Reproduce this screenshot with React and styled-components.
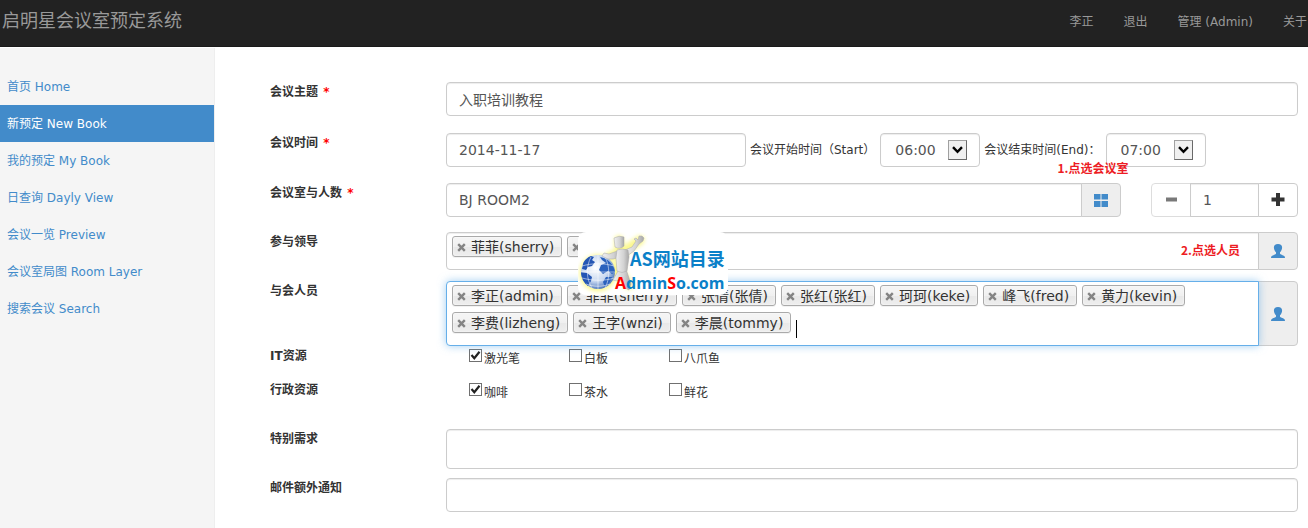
import React, { useState } from "react";
import styled, { createGlobalStyle } from "styled-components";

const menus = ["首页 Home", "新预定 New Book", "我的预定 My Book", "日查询 Dayly View", "会议一览 Preview", "会议室局图 Room Layer", "搜索会议 Search"];
const navs = ["李正", "退出", "管理 (Admin)", "关于"];
const hours = ["06:00", "07:00", "08:00", "09:00", "10:00"];
const itResources = ["激光笔", "白板", "八爪鱼"];
const officeResources = ["咖啡", "茶水", "鲜花"];

const UserIcon = () => (
  <svg width="14" height="14" viewBox="0 0 14 14" aria-hidden="true">
    <path
      fill="#428bca"
      d="M7 0C9.8 0 11.2 1.4 11.1 3.7C11 5.6 10.1 7.2 9 8.3V9.8C9.2 10.5 12 11.1 13.2 11.9C13.8 12.3 14 13 14 14H0C0 13 .2 12.3 .8 11.9C2 11.1 4.8 10.5 5 9.8V8.3C3.9 7.2 3 5.6 2.9 3.7C2.8 1.4 4.2 0 7 0Z"
    />
  </svg>
);

const GridIcon = () => (
  <svg width="14" height="14" viewBox="0 0 14 14" aria-hidden="true">
    <path fill="#428bca" d="M0 1H6.5V6.6H0ZM7.5 1H14V6.6H7.5ZM0 8H6.5V14H0ZM7.5 8H14V14H7.5Z" />
  </svg>
);

// 标签上的删除图标
const CloseIcon = () => (
  <svg width="9" height="9" viewBox="0 0 9 9" aria-hidden="true">
    <path d="M1.2 1.2L7.8 7.8M7.8 1.2L1.2 7.8" stroke="#848484" strokeWidth="2.4" />
  </svg>
);

const SiteLogo = () => (
  <svg width="150" height="63" viewBox="0 0 150 63" role="img" aria-label="AS网站目录">
    <defs>
      <radialGradient id="globe" cx="42%" cy="38%" r="65%">
        <stop offset="0" stopColor="#ffffff" />
        <stop offset="0.6" stopColor="#c9d9f0" />
        <stop offset="1" stopColor="#4571bb" />
      </radialGradient>
      <linearGradient id="body" x1="0" x2="1">
        <stop offset="0" stopColor="#f0f0f0" />
        <stop offset="0.6" stopColor="#d2d2d2" />
        <stop offset="1" stopColor="#a6a6a6" />
      </linearGradient>
      <filter id="glow" x="-30%" y="-30%" width="160%" height="160%">
        <feGaussianBlur stdDeviation="2" />
      </filter>
    </defs>
    <rect width="150" height="63" rx="8" fill="#fff" />
    <g fill="none" stroke="#fbf88e" strokeWidth="9" strokeLinecap="round" strokeLinejoin="round" filter="url(#glow)">
      <circle cx="20" cy="41" r="14" />
      <path d="M41 8V18M32 24L45 20L62 8M42 24V40L51 53" />
    </g>
    <circle cx="20" cy="40" r="17" fill="url(#globe)" />
    <path d="M5 32C6 28 10 25 13 24L16 25L14 28L17 30L14 34L10 35L8 38L4 37ZM3 40L9 41L14 45L13 49L10 54C6 51 3 46 3 40Z" fill="#2456b4" />
    <path d="M22 25C30 26 36 33 37 40L34 42L30 39L25 42L21 38L23 33L28 31L24 28ZM28 45L34 45C33 49 31 52 27 55L25 50Z" fill="#2a62bd" />
    <path d="M4 34C14 31 26 31 36 34M3 40H37M4 46C15 49 27 49 36 46M8 52C16 55 24 55 32 52M13 25C8 34 8 47 14 56M20 23V57M27 25C32 34 32 47 27 56" fill="none" stroke="#fff" strokeWidth="0.7" opacity="0.75" />
    <g fill="url(#body)" stroke="#a8a8a8" strokeWidth="0.5" strokeLinejoin="round">
      <path d="M40 39L48 37L53 52L51 58L47 56L44 45L39 49L35 48Z" />
      <path d="M42 18L31 22L26 21L24 24L30 27L35 27L43 25Z" />
      <path d="M47 18L54 15L58 9L56 7L58 6L60 8L61 4L64 4L66 6L65 9L61 12L56 19L49 24Z" />
      <path d="M39 18Q44 16 50 18L51 25L49 39Q44 42 39 39L38 26Z" />
      <path d="M36 6Q41 3 46 5L46 14Q42 18 37 15Z" />
    </g>
    <text x="52" y="34" fontFamily="'Noto Sans CJK SC', sans-serif" fontSize="18" fontWeight="700" fill="#0a80c8">
      AS网站目录
    </text>
    <text x="37" y="57" fontFamily="'Open Sans', sans-serif" fontSize="16" fontWeight="700" fill="#0a80c8">
      <tspan fill="#f00">A</tspan>dmin<tspan fill="#f00">S</tspan>o.com
    </text>
  </svg>
);

const Token = ({ name }) => (
  <StToken>
    <StTokenClose type="button" aria-label={`删除 ${name}`}>
      <CloseIcon />
    </StTokenClose>
    {name}
  </StToken>
);

const TimeSelect = ({ id, value, onChange }) => (
  <StSelectBox>
    <StSelect id={id} value={value} onChange={(e) => onChange(e.target.value)}>
      {hours.map((hour) => (
        <option key={hour}>{hour}</option>
      ))}
    </StSelect>
    <StArrow>
      <svg width="11" height="8" viewBox="0 0 11 8" aria-hidden="true">
        <path d="M1 1.2L5.5 5.8L10 1.2" fill="none" stroke="#000" strokeWidth="2.4" />
      </svg>
    </StArrow>
  </StSelectBox>
);

const CheckGroup = ({ names, label }) => (
  <StChecks role="group" aria-label={label}>
    {names.map((name, i) => (
      <StCheckLabel key={name}>
        <StCheck type="checkbox" defaultChecked={i === 0} />
        {name}
      </StCheckLabel>
    ))}
  </StChecks>
);

const App = () => {
  const [subject, setSubject] = useState("入职培训教程");
  const [date, setDate] = useState("2014-11-17");
  const [start, setStart] = useState("06:00");
  const [end, setEnd] = useState("07:00");
  const [room, setRoom] = useState("BJ ROOM2");
  const [count, setCount] = useState(1);

  const leaders = ["菲菲(sherry)", "张倩(张倩)"];
  const members = ["李正(admin)", "菲菲(sherry)", "张倩(张倩)", "张红(张红)", "珂珂(keke)", "峰飞(fred)", "黄力(kevin)", "李费(lizheng)", "王字(wnzi)", "李晨(tommy)"];

  return (
    <>
      <GlobalStyle />
      <StHeader>
        <StBrand href="#">启明星会议室预定系统</StBrand>
        <StNav>
          {navs.map((nav) => (
            <StNavLink key={nav} href="#">
              {nav}
            </StNavLink>
          ))}
        </StNav>
      </StHeader>
      <StLayout>
        <StSidebar>
          {menus.map((menu, i) => (
            <StMenuLink key={menu} href="#" $active={i === 1}>
              {menu}
            </StMenuLink>
          ))}
        </StSidebar>
        <StForm>
          <StRow $gap={17}>
            <StLabel htmlFor="subject">
              会议主题 <StRequired>*</StRequired>
            </StLabel>
            <StInput id="subject" value={subject} onChange={(e) => setSubject(e.target.value)} />
          </StRow>

          <StRow $gap={16}>
            <StLabel htmlFor="date">
              会议时间 <StRequired>*</StRequired>
            </StLabel>
            <StTimes>
              <StDateInput id="date" value={date} onChange={(e) => setDate(e.target.value)} />
              <StTimeLabel htmlFor="start">会议开始时间（Start）</StTimeLabel>
              <TimeSelect id="start" value={start} onChange={setStart} />
              <StTimeLabel htmlFor="end">会议结束时间(End)：</StTimeLabel>
              <StAnchor>
                <TimeSelect id="end" value={end} onChange={setEnd} />
                <StRoomNote>1.点选会议室</StRoomNote>
              </StAnchor>
            </StTimes>
          </StRow>

          <StRow $gap={15}>
            <StLabel htmlFor="room">
              会议室与人数 <StRequired>*</StRequired>
            </StLabel>
            <StRoomLine>
              <StGroup>
                <StGroupInput id="room" value={room} onChange={(e) => setRoom(e.target.value)} />
                <StAddon type="button" aria-label="选择会议室">
                  <GridIcon />
                </StAddon>
              </StGroup>
              <StSpinner>
                <StStepBtn type="button" $side="left" $muted={count <= 1} aria-label="减少" onClick={() => setCount(Math.max(1, count - 1))}>
                  <svg width="14" height="14" viewBox="0 0 14 14" aria-hidden="true">
                    <path d="M2 4.5H13V8.5H2Z" fill="#333" />
                  </svg>
                </StStepBtn>
                <StCount value={count} aria-label="人数" readOnly />
                <StStepBtn type="button" $side="right" aria-label="增加" onClick={() => setCount(count + 1)}>
                  <svg width="14" height="14" viewBox="0 0 14 14" aria-hidden="true">
                    <path d="M5 0H9V4.5H13.5V8.5H9V13H5V8.5H.5V4.5H5Z" fill="#333" />
                  </svg>
                </StStepBtn>
              </StSpinner>
            </StRoomLine>
          </StRow>

          <StRow $gap={11}>
            <StLabel htmlFor="leader">参与领导</StLabel>
            <StGroup>
              <StTokens>
                {leaders.map((name) => (
                  <Token key={name} name={name} />
                ))}
                <StTokenInput id="leader" />
              </StTokens>
              <StAddon type="button" aria-label="选择领导">
                <UserIcon />
              </StAddon>
              <StPeopleNote>2.点选人员</StPeopleNote>
              <StWatermark>
                <SiteLogo />
              </StWatermark>
            </StGroup>
          </StRow>

          <StRow $gap={0}>
            <StLabel htmlFor="member">与会人员</StLabel>
            <StGroup>
              <StTokens $focused>
                {members.map((name) => (
                  <Token key={name} name={name} />
                ))}
                <StCaret />
                <StTokenInput id="member" />
              </StTokens>
              <StAddon type="button" aria-label="选择人员">
                <UserIcon />
              </StAddon>
            </StGroup>
          </StRow>

          <StRow $gap={0}>
            <StLabel as="span">IT资源</StLabel>
            <CheckGroup names={itResources} label="IT资源" />
          </StRow>

          <StRow $gap={15}>
            <StLabel as="span">行政资源</StLabel>
            <CheckGroup names={officeResources} label="行政资源" />
          </StRow>

          <StRow $gap={9}>
            <StLabel htmlFor="demand">特别需求</StLabel>
            <StTextArea id="demand" rows={1} />
          </StRow>

          <StRow $gap={0}>
            <StLabel htmlFor="mail">邮件额外通知</StLabel>
            <StInput id="mail" />
          </StRow>
        </StForm>
      </StLayout>
    </>
  );
};

export default App;

const GlobalStyle = createGlobalStyle`
  * {
    box-sizing: border-box;
  }
  body {
    margin: 0;
    background: #fff;
    color: #333;
    font-family: "DejaVu Sans", "Noto Sans CJK SC", sans-serif;
    font-size: 12px;
    line-height: 18px;
  }
  button, input, select, textarea {
    margin: 0;
    font-family: inherit;
  }
  a {
    text-decoration: none;
  }
`;

const StHeader = styled.header`
  display: flex;
  justify-content: space-between;
  height: 47px;
  background: #222;
  border-bottom: 1px solid #1a1a1a;
  overflow: hidden;
`;

const StBrand = styled.a`
  padding: 11px 2px;
  color: #999;
  font-size: 18px;
  line-height: 20px;
`;

const StNav = styled.nav`
  display: flex;
  gap: 30px;
  padding: 13px 1px 0 0;
`;

const StNavLink = styled.a`
  color: #999;
  white-space: nowrap;
`;

const StLayout = styled.div`
  display: flex;
  min-height: calc(100vh - 47px);
`;

const StSidebar = styled.nav`
  flex: 0 0 215px;
  margin-top: 1px;
  padding-top: 20px;
  background: #f5f5f5;
  border-right: 1px solid #eee;
`;

const StMenuLink = styled.a`
  display: block;
  padding: 10px 7px 9px;
  color: ${({ $active }) => ($active ? "#fff" : "#428bca")};
  background: ${({ $active }) => ($active ? "#428bca" : "transparent")};
`;

const StForm = styled.form`
  flex: 1;
  min-width: 0;
  padding: 35px 10px 0 55px;
`;

const StRow = styled.div`
  display: grid;
  grid-template-columns: 176px minmax(0, 1fr);
  align-items: start;
  margin-bottom: ${({ $gap }) => $gap}px;
`;

const StLabel = styled.label`
  padding-top: 1px;
  font-weight: 700;
`;

const StRequired = styled.span`
  margin-left: 1px;
  color: #f00;
`;

const StInput = styled.input`
  width: 100%;
  height: 34px;
  padding: 6px 12px;
  border: 1px solid #ccc;
  border-radius: 4px;
  background: #fff;
  box-shadow: inset 0 1px 1px rgba(0, 0, 0, 0.075);
  color: #555;
  font-size: 14px;
  outline: none;
`;

const StTimes = styled.div`
  display: flex;
  align-items: center;
  gap: 4px;
`;

const StDateInput = styled(StInput)`
  width: 300px;
`;

const StTimeLabel = styled.label`
  padding-right: 1px;
  white-space: nowrap;
`;

const StSelectBox = styled.div`
  position: relative;
  width: 100px;
`;

const StSelect = styled(StInput).attrs({ as: "select" })`
  appearance: none;
  display: block;
  padding: 6px 14px;
`;

// 覆盖在下拉框上的箭头按钮
const StArrow = styled.span`
  position: absolute;
  top: 7px;
  right: 13px;
  display: flex;
  align-items: center;
  justify-content: center;
  width: 19px;
  height: 20px;
  background: #f0f0f0;
  border: 1px solid;
  border-color: #a0a0a0 #696969 #696969 #a0a0a0;
  pointer-events: none;
`;

const StAnchor = styled.div`
  position: relative;
`;

const StNote = styled.span`
  position: absolute;
  color: #ed1c24;
  font-family: "Noto Sans CJK SC", sans-serif;
  font-weight: 700;
  white-space: nowrap;
`;

const StRoomNote = styled(StNote)`
  top: 26px;
  left: -48px;
`;

const StPeopleNote = styled(StNote)`
  top: 9px;
  right: 58px;
`;

const StRoomLine = styled.div`
  display: flex;
  gap: 30px;
`;

const StGroup = styled.div`
  position: relative;
  display: flex;
  flex: 1;
  min-width: 0;
`;

const StGroupInput = styled(StInput)`
  flex: 1;
  min-width: 0;
  border-radius: 4px 0 0 4px;
`;

const StAddon = styled.button`
  display: flex;
  flex: 0 0 40px;
  align-items: center;
  justify-content: center;
  margin-left: -1px;
  padding: 0;
  border: 1px solid #ccc;
  border-radius: 0 4px 4px 0;
  background: #eee;
  cursor: pointer;
`;

const StSpinner = styled.div`
  display: flex;
  width: 147px;
`;

const StStepBtn = styled.button`
  display: flex;
  flex: 0 0 40px;
  align-items: center;
  justify-content: center;
  padding: 0;
  border: 1px solid #ccc;
  border-radius: ${({ $side }) => ($side === "left" ? "4px 0 0 4px" : "0 4px 4px 0")};
  background: #fff;
  opacity: ${({ $muted }) => ($muted ? 0.65 : 1)};
`;

const StCount = styled(StInput)`
  flex: 1;
  min-width: 0;
  margin: 0 -1px;
  border-radius: 0;
`;

const StTokens = styled.div`
  position: relative;
  z-index: ${({ $focused }) => ($focused ? 1 : 0)};
  display: flex;
  flex: 1;
  flex-wrap: wrap;
  align-content: flex-start;
  gap: 6px 5px;
  min-width: 0;
  padding: 3px 5px 12px;
  border: 1px solid ${({ $focused }) => ($focused ? "#66afe9" : "#ccc")};
  border-radius: 4px 0 0 4px;
  background: #fff;
  box-shadow: ${({ $focused }) => ($focused ? "0 0 8px rgba(102, 175, 233, 0.6)" : "inset 0 1px 1px rgba(0, 0, 0, 0.075)")};
`;

const StToken = styled.span`
  display: flex;
  align-items: center;
  height: 21px;
  padding: 0 7px 0 4px;
  border: 1px solid #aaa;
  border-radius: 3px;
  background: linear-gradient(#f4f4f4 20%, #f0f0f0 50%, #e8e8e8 52%, #eee);
  box-shadow: 0 0 2px #fff inset, 0 1px 0 rgba(0, 0, 0, 0.05);
  color: #333;
  font-size: 14px;
  white-space: nowrap;
`;

const StTokenClose = styled.button`
  display: flex;
  margin-right: 5px;
  padding: 1px 0 0;
  border: none;
  background: transparent;
`;

const StTokenInput = styled.input`
  width: 20px;
  height: 21px;
  padding: 0;
  border: none;
  background: transparent;
  font-size: 14px;
  outline: none;
`;

const StCaret = styled.span`
  width: 1px;
  height: 18px;
  margin-top: 8px;
  margin-bottom: -5px;
  background: #000;
`;

const StWatermark = styled.div`
  position: absolute;
  z-index: 2;
  top: 0;
  left: 132px;
  pointer-events: none;
`;

const StChecks = styled.div`
  display: flex;
  height: 34px;
  padding: 3px 0 0 23px;
`;

const StCheckLabel = styled.label`
  display: flex;
  align-items: flex-start;
  width: 100px;
  line-height: 20px;
`;

const StCheck = styled.input`
  appearance: none;
  width: 13px;
  height: 13px;
  margin-right: 2px;
  border: 1px solid #707070;
  background: #fff;
  &:checked {
    background: #fff
      url("data:image/svg+xml,%3Csvg xmlns='http://www.w3.org/2000/svg' viewBox='0 0 11 11'%3E%3Cpath d='M1.5 5L4.3 8.2L9.5 1.8' fill='none' stroke='%23212121' stroke-width='2.2'/%3E%3C/svg%3E")
      center / 11px 11px no-repeat;
  }
`;

const StTextArea = styled(StInput).attrs({ as: "textarea" })`
  display: block;
  height: 40px;
  resize: none;
`;
